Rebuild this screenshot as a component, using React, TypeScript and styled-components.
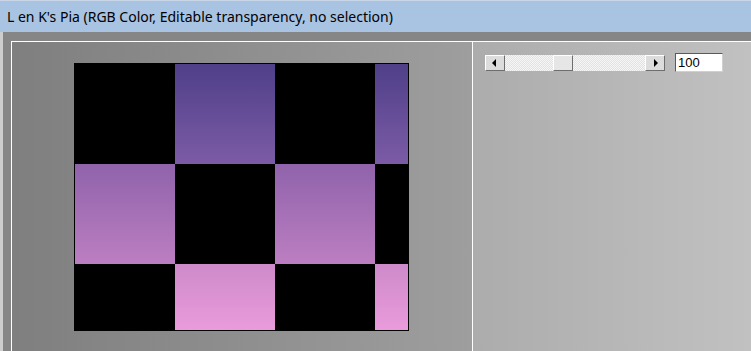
import React from "react";
import styled, { createGlobalStyle } from "styled-components";

const GlobalStyle = createGlobalStyle`
  html, body {
    margin: 0;
    padding: 0;
    background: #8c8c8c;
    overflow: hidden;
  }
  body {
    font-family: "Noto Sans", "Liberation Sans", sans-serif;
  }
`;

const ROWS = [100, 100, 66];
const COLS = [100, 100, 100, 33];

const App = () => {
  return (
    <Window>
      <GlobalStyle />
      <TitleBar>L en K's Pia (RGB Color, Editable transparency, no selection)</TitleBar>
      <Body>
        <Inner>
          <CanvasPanel>
            <Picture>
              {ROWS.map((_, r) =>
                COLS.map((_, c) => (
                  <Cell key={`${r}-${c}`} $dark={(r + c) % 2 === 0} />
                ))
              )}
            </Picture>
          </CanvasPanel>
          <SidePanel>
            <Controls>
              <ScrollBar>
                <ArrowButton>
                  <Arrow $dir="left" />
                </ArrowButton>
                <Track>
                  <Thumb />
                </Track>
                <ArrowButton>
                  <Arrow $dir="right" />
                </ArrowButton>
              </ScrollBar>
              <ValueBox>100</ValueBox>
            </Controls>
          </SidePanel>
        </Inner>
      </Body>
    </Window>
  );
};

const Window = styled.div`
  width: 751px;
  height: 351px;
  display: flex;
  flex-direction: column;
  overflow: hidden;
`;

const TitleBar = styled.div`
  height: 31px;
  border-top: 1px solid #c9d7e8;
  background: #a9c3e2;
  color: #000;
  font-size: 14px;
  line-height: 31px;
  padding-left: 7px;
  white-space: nowrap;
`;

const Body = styled.div`
  flex: 1;
  display: flex;
  border-left: 3px solid #cdcdcd;
  background: #868686;
  padding: 9px 0 0 8px;
`;

const Inner = styled.div`
  flex: 1;
  display: flex;
  border-top: 1px solid #fff;
  border-left: 1px solid #fff;
`;

const CanvasPanel = styled.div`
  width: 461px;
  border-right: 1px solid #fff;
  background: linear-gradient(to right, #7f7f7f, #9e9e9e);
  padding: 21px 0 0 62px;
  box-sizing: border-box;
`;

const Picture = styled.div`
  width: 333px;
  height: 266px;
  border: 1px solid #000;
  display: grid;
  grid-template-columns: ${COLS.map((c) => `${c}px`).join(" ")};
  grid-template-rows: ${ROWS.map((r) => `${r}px`).join(" ")};
  background: linear-gradient(
    to bottom,
    #4f3f89 0px,
    #7c5ba5 100px,
    #8f63ab 100px,
    #bc7ec1 200px,
    #cd8aca 200px,
    #ea9bdb 266px
  );
`;

const Cell = styled.div<{ $dark: boolean }>`
  background: ${({ $dark }) => ($dark ? "#000" : "transparent")};
`;

const SidePanel = styled.div`
  flex: 1;
  background: linear-gradient(to right, #acacac, #c1c1c1);
  padding: 11px 0 0 12px;
`;

const Controls = styled.div`
  display: flex;
  align-items: center;
  gap: 10px;
`;

const ScrollBar = styled.div`
  display: flex;
  width: 180px;
  height: 16px;
`;

const ArrowButton = styled.div`
  width: 20px;
  height: 16px;
  box-sizing: border-box;
  background: #dcdcdc;
  border-top: 1px solid #fff;
  border-left: 1px solid #fff;
  border-right: 1px solid #6e6e6e;
  border-bottom: 1px solid #6e6e6e;
  display: flex;
  align-items: center;
  justify-content: center;
`;

const Arrow = styled.span<{ $dir: "left" | "right" }>`
  width: 0;
  height: 0;
  border-top: 4px solid transparent;
  border-bottom: 4px solid transparent;
  ${({ $dir }) =>
    $dir === "left"
      ? "border-right: 4px solid #000; margin-left: -2px;"
      : "border-left: 4px solid #000; margin-left: 2px;"}
`;

const Track = styled.div`
  flex: 1;
  background-color: #f2f2f2;
  background-image: repeating-conic-gradient(#e2e2e2 0 25%, #f6f6f6 0 50%);
  background-size: 2px 2px;
  padding-left: 48px;
`;

const Thumb = styled.div`
  width: 20px;
  height: 16px;
  box-sizing: border-box;
  background: #e6e6e6;
  border-top: 1px solid #fff;
  border-left: 1px solid #fff;
  border-right: 1px solid #6e6e6e;
  border-bottom: 1px solid #6e6e6e;
`;

const ValueBox = styled.div`
  width: 48px;
  height: 19px;
  box-sizing: border-box;
  background: #fff;
  border: 1px solid #5a5a5a;
  border-right-color: #d0d0d0;
  border-bottom-color: #d0d0d0;
  font-family: "Liberation Sans", Arial, sans-serif;
  font-size: 13px;
  line-height: 17px;
  padding-left: 2px;
  color: #000;
`;

export default App;
